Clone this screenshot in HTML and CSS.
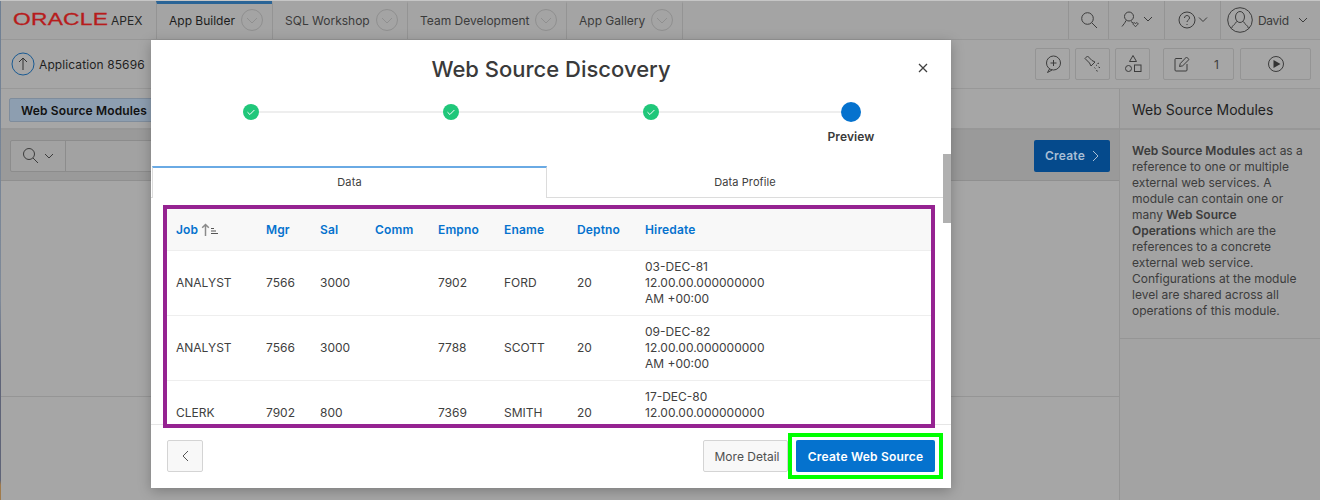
FILE: index.html
```html
<!DOCTYPE html>
<html lang="en">
<head>
<meta charset="utf-8">
<title>Web Source Discovery</title>
<link rel="stylesheet" href="styles.css">
</head>
<body>
<div class="page">
  <header class="topbar">
    <div class="logo"><span class="oracle">ORACLE</span><span class="apex">APEX</span></div>
    <nav class="nav">
      <div class="nav-tab nav-tab-active w1"><span>App Builder</span><svg class="circ" viewBox="0 0 22 22"><circle cx="11" cy="11" r="10.5"/><path d="M6 9l5 5 5-5"/></svg></div>
      <div class="nav-tab w2"><span>SQL Workshop</span><svg class="circ" viewBox="0 0 22 22"><circle cx="11" cy="11" r="10.5"/><path d="M6 9l5 5 5-5"/></svg></div>
      <div class="nav-tab w3"><span>Team Development</span><svg class="circ" viewBox="0 0 22 22"><circle cx="11" cy="11" r="10.5"/><path d="M6 9l5 5 5-5"/></svg></div>
      <div class="nav-tab w4"><span>App Gallery</span><svg class="circ" viewBox="0 0 22 22"><circle cx="11" cy="11" r="10.5"/><path d="M6 9l5 5 5-5"/></svg></div>
    </nav>
    <div class="tools">
      <div class="tool t1"><svg class="ico" width="18" height="18" viewBox="0 0 18 18"><circle cx="7.5" cy="7.5" r="5.8"/><path d="M11.8 11.8L17 17"/></svg></div>
      <div class="tool t2"><svg class="ico" width="32" height="18" viewBox="0 0 32 18"><circle cx="8" cy="5.5" r="4.5"/><path d="M5 9.5C4 12 2.5 13.5 1 15.5M10 10.5l2 1.5"/><path d="M12 12.5c1-1 2-1 2.500 0 .5-1 2-1 2.500 0 0 1.500-1.500 2-2.500 3-1-1-2.500-1.500-2.500-3z"/><path d="M23 6l4 4 4-4"/></svg></div>
      <div class="tool t3"><svg class="ico" width="30" height="18" viewBox="0 0 30 18"><circle cx="9" cy="9" r="8"/><path d="M6.500 7c0-3.300 5-3.300 5 0 0 2-2.500 2-2.500 4M9 13v1"/><path d="M21 6.500l4 4 4-4"/></svg></div>
      <div class="tool t4"><svg class="ico avatar" width="26" height="26" viewBox="0 0 26 26"><circle cx="13" cy="13" r="12.300"/><ellipse cx="13" cy="10" rx="4.500" ry="5.500"/><path d="M9.500 14.500C9 17 5 18 4.500 21.500M16.500 14.500C17 17 21 18 21.500 21.500"/></svg><span class="david">David</span><svg class="ico" width="10" height="6" viewBox="0 0 10 6"><path d="M1 1l4 4 4-4"/></svg></div>
    </div>
  </header>

  <section class="toolbar">
    <svg class="up" width="24" height="24" viewBox="0 0 24 24"><circle cx="12" cy="12" r="11"/><path d="M12 18V6M8 10l4-4 4 4"/></svg>
    <span class="app-name">Application 85696</span>
    <div class="actions">
      <div class="btn-g b-s"><svg class="ico" width="18" height="18" viewBox="0 0 18 18"><circle cx="9.500" cy="8" r="7"/><path d="M5.500 14l-2 3.500 4.500-2.500M9.500 5v6M6.500 8h6"/></svg></div>
      <div class="btn-g b-s"><svg class="ico" width="18" height="18" viewBox="0 0 18 18"><path d="M1 3.500L3.500 1 8 5.500l3 1.500-4 4-1.500-3zM12 10l1 .5M10.500 12.500l.8 1M13.500 8.500l1.500-.3M14.500 12l1.500.8M12.500 15l.8 1.500"/></svg></div>
      <div class="btn-g b-s"><svg class="ico" width="18" height="20" viewBox="0 0 18 20"><path d="M9 1.500l3.500 6h-7z"/><circle cx="4.500" cy="14.500" r="3"/><rect x="10.500" y="11" width="6.500" height="6.500"/></svg></div>
      <div class="btn-g b-m gap"><svg class="ico" width="16" height="16" viewBox="0 0 16 16"><path d="M8 2.500H2a1 1 0 0 0-1 1V14a1 1 0 0 0 1 1h10a1 1 0 0 0 1-1V8M5.500 10.500l.8-3L12.500 1l2.500 2.500-6.300 6.300z"/></svg><span>1</span></div>
      <div class="btn-g b-m last"><svg class="ico" width="18" height="18" viewBox="0 0 18 18"><circle cx="9" cy="9" r="7.500"/><path class="solid" d="M6.500 5l7 4-7 4z"/></svg></div>
    </div>
  </section>

  <main class="main">
    <div class="content">
      <div class="crumbs"><div class="crumb">Web Source Modules</div></div>
      <div class="searchbar">
        <div class="search"><div class="search-btn"><svg class="ico" width="18" height="18" viewBox="0 0 18 18"><circle cx="7" cy="7" r="5.500"/><path d="M11 11l5 5"/></svg><svg class="ico" width="10" height="6" viewBox="0 0 10 6"><path d="M1 1l4 4 4-4"/></svg></div></div>
        <div class="create">Create<svg class="ico" width="7" height="12" viewBox="0 0 7 12"><path d="M1 1l5 5-5 5"/></svg></div>
      </div>
      <div class="empty"></div>
    </div>
    <aside class="side">
      <h2 class="side-title">Web Source Modules</h2>
      <p class="side-body"><b>Web Source Modules</b> act as a reference to one or multiple external web services. A module can contain one or many <b>Web Source<br>Operations</b> which are the references to a concrete external web service. Configurations at the module level are shared across all operations of this module.</p>
    </aside>
  </main>

  <div class="modal">
    <div class="modal-head">
      <h1 class="modal-title">Web Source Discovery</h1>
      <svg class="close" width="10" height="10" viewBox="0 0 10 10"><path d="M1 1l8 8M9 1L1 9"/></svg>
    </div>
    <div class="steps">
      <div class="step"><svg class="dot" width="16" height="16" viewBox="0 0 16 16"><circle cx="8" cy="8" r="8"/><path d="M4.500 8.200l2.400 2.300 4.500-4.500"/></svg></div>
      <div class="step"><svg class="dot" width="16" height="16" viewBox="0 0 16 16"><circle cx="8" cy="8" r="8"/><path d="M4.500 8.200l2.400 2.300 4.500-4.500"/></svg></div>
      <div class="step"><svg class="dot" width="16" height="16" viewBox="0 0 16 16"><circle cx="8" cy="8" r="8"/><path d="M4.500 8.200l2.400 2.300 4.500-4.500"/></svg></div>
      <div class="step step-last"><div class="dot-now"></div><div class="step-label">Preview</div></div>
    </div>
    <div class="tabs">
      <div class="tab tab-on">Data</div>
      <div class="tab">Data Profile</div>
    </div>
    <div class="frame">
      <table class="grid">
        <colgroup><col class="c1"><col class="c2"><col class="c3"><col class="c4"><col class="c5"><col class="c6"><col class="c7"><col class="c8"></colgroup>
        <thead>
          <tr><th>Job <svg class="sort" width="20" height="13" viewBox="0 0 20 13"><path class="arrow" d="M4.500 13V1.500M1.200 4.800l3.300-3.300 3.300 3.300"/><path class="lines" d="M10 5.500h3M10 8h5M10 10.500h7"/></svg></th><th>Mgr</th><th>Sal</th><th>Comm</th><th>Empno</th><th>Ename</th><th>Deptno</th><th>Hiredate</th></tr>
        </thead>
        <tbody>
          <tr><td>ANALYST</td><td>7566</td><td>3000</td><td></td><td>7902</td><td>FORD</td><td>20</td><td>03-DEC-81<br>12.00.00.000000000<br>AM +00:00</td></tr>
          <tr><td>ANALYST</td><td>7566</td><td>3000</td><td></td><td>7788</td><td>SCOTT</td><td>20</td><td>09-DEC-82<br>12.00.00.000000000<br>AM +00:00</td></tr>
          <tr><td>CLERK</td><td>7902</td><td>800</td><td></td><td>7369</td><td>SMITH</td><td>20</td><td>17-DEC-80<br>12.00.00.000000000<br>AM +00:00</td></tr>
        </tbody>
      </table>
    </div>
    <div class="foot">
      <div class="back"><svg class="ico" width="7" height="12" viewBox="0 0 7 12"><path d="M6 1L1 6l5 5"/></svg></div>
      <div class="more">More Detail</div>
      <div class="mark"><div class="go">Create Web Source</div></div>
    </div>
    <div class="thumb"></div>
  </div>
</div>
</body>
</html>
```
FILE: styles.css
```css
* { box-sizing: border-box; }
html, body { margin: 0; padding: 0; }
body { font-family: Inter, "Liberation Sans", sans-serif; font-size: 12px; color: #262626; background: #a6a6a6; }
.page { position: relative; width: 1320px; height: 500px; overflow: hidden; display: flex; flex-direction: column; background: #a6a6a6; border-top: 1px solid #c6c6c6; }
.page::before { content: ""; position: absolute; left: 0; top: 0; width: 1px; height: 100%; z-index: 2; background: linear-gradient(#6f7f93 0, #7f8a99 60%, #5f6478 75%, #5f6478 96%, #a07a4a 97%); }
svg { display: block; flex: none; }
.ico { fill: none; stroke: #3c3c3c; stroke-width: 1; }
.ico .solid { fill: #333; stroke: none; }

.topbar { height: 39px; display: flex; align-items: stretch; background: #a4a4a4; border-bottom: 1px solid #979797; flex: none; }
.logo { width: 156px; display: flex; align-items: center; padding-left: 13px; }
.oracle { color: #b71c1c; font: 400 16px "Liberation Sans", sans-serif; letter-spacing: .2px; transform: scaleX(1.42); transform-origin: 0 50%; width: 98px; -webkit-text-stroke: .3px #b71c1c; }
.apex { font-size: 12px; color: #262626; }
.nav { display: flex; }
.nav-tab { display: flex; align-items: center; padding-left: 12px; border-left: 1px solid #949494; border-top: 3px solid transparent; color: #3b3b3b; font-size: 12px; }
.nav-tab-active { border-top-color: #2a6496; color: #1c1c1c; }
.nav-tab span { margin-top: -3px; }
.w1 { width: 116px; }
.w2 { width: 135px; }
.w3 { width: 159px; }
.w4 { width: 117px; border-right: 1px solid #949494; }
.circ { width: 22px; height: 22px; margin: -3px 9px 0 auto; fill: none; stroke: #8f8f8f; stroke-width: 1; }
.tools { margin-left: auto; display: flex; }
.tool { display: flex; align-items: center; justify-content: center; border-left: 1px solid #949494; }
.t1 { width: 40px; }
.t2 { width: 56px; }
.t3 { width: 56px; }
.t4 { width: 100px; justify-content: flex-start; padding-left: 7px; }
.avatar { margin-left: -1px; }
.david { margin: 0 9px 0 5px; color: #3b3b3b; letter-spacing: -.3px; }

.toolbar { height: 49px; display: flex; align-items: center; padding: 0 9px 0 11px; background: #a6a6a6; border-bottom: 1px solid #989898; flex: none; }
.up { fill: none; stroke: #1a5a92; stroke-width: 1; }
.up path { stroke: #333; }
.app-name { margin-left: 4px; color: #1f1f1f; letter-spacing: .1px; }
.actions { margin-left: auto; display: flex; gap: 5px; }
.btn-g { height: 32px; display: flex; align-items: center; justify-content: center; border: 1px solid #949494; border-radius: 2px; background: #a6a6a6; color: #3c3c3c; }
.b-s { width: 35px; }
.b-m { width: 71px; }
.gap { margin-left: 8px; gap: 24px; padding-right: 4px; }
.last { margin-left: 1px; }

.main { flex: 1; display: flex; min-height: 0; }
.content { flex: 1; display: flex; flex-direction: column; }
.crumbs { height: 41px; padding: 9px; background: #a6a6a6; border-bottom: 2px solid #979797; }
.crumb { width: 180px; height: 24px; display: flex; align-items: center; padding-left: 11px; background: #8d9eb0; border: 1px solid #7e8c9c; border-radius: 2px; font-weight: 600; color: #111; white-space: nowrap; letter-spacing: .15px; }
.searchbar { height: 51px; display: flex; align-items: center; justify-content: space-between; padding: 1px 9px 0 10px; background: #9a9a9a; border-bottom: 1px solid #8f8f8f; }
.search { width: 400px; height: 32px; border: 1px solid #8c8c8c; border-radius: 2px; background: #a2a2a2; }
.search-btn { width: 55px; height: 30px; display: flex; align-items: center; justify-content: center; gap: 4px; border-right: 1px solid #8c8c8c; }
.create { width: 76px; height: 32px; display: flex; align-items: center; justify-content: center; gap: 7px; background: #054a8c; border-radius: 2px; color: #a9bfd5; font-weight: 600; letter-spacing: .2px; }
.create .ico { stroke: #a9bfd5; }
.empty { flex: 1; background: linear-gradient(#a6a6a6 215px, #959595 215px, #959595 216px, #a6a6a6 216px); }

.side { width: 201px; flex: none; background: #a3a3a3; border-left: 1px solid #959595; }
.side-title { margin: 0; height: 41px; padding: 12px 0 0 12px; font-size: 14px; font-weight: 400; color: #1f1f1f; border-bottom: 2px solid #979797; line-height: 17px; }
.side-body { margin: 0; height: 209px; padding: 13px 12px 0 12px; line-height: 16px; color: #3c3c3c; border-bottom: 1px solid #959595; }
.side-body b { font-weight: 600; }

.modal { position: absolute; left: 151px; top: 39px; width: 800px; height: 448px; background: #fff; display: flex; flex-direction: column; box-shadow: 0 3px 12px rgba(0,0,0,.25); z-index: 3; }
.modal-head { height: 56px; padding-top: 2px; display: flex; align-items: center; justify-content: center; position: relative; flex: none; }
.modal-title { margin: 0; font-size: 22px; font-weight: 500; color: #3a3a3a; line-height: 30px; }
.close { position: absolute; left: 767px; top: 23px; fill: none; stroke: #404040; stroke-width: 1.300; }

.steps { height: 70px; display: grid; grid-template-columns: repeat(4, 200px); flex: none; padding-top: 6px; }
.step { position: relative; height: 20px; display: flex; flex-direction: column; align-items: center; }
.step .dot { margin-top: 2px; position: relative; z-index: 1; fill: #20c77a; }
.dot path { fill: none; stroke: #fff; stroke-width: 1; }
.step::after { content: ""; position: absolute; left: 50%; width: 200px; top: 9px; height: 2px; background: #eeeeee; }
.step-last::after { display: none; }
.dot-now { width: 20px; height: 20px; border-radius: 50%; background: #0572ce; flex: none; position: relative; z-index: 1; }
.step-label { margin-top: 8px; font-weight: 600; color: #3a3a3a; line-height: 14px; white-space: nowrap; letter-spacing: .1px; }

.tabs { height: 32px; display: flex; width: 792px; padding-left: 1px; flex: none; border-bottom: 1px solid #dcdcdc; font-size: 11px; color: #404040; letter-spacing: .1px; }
.tab { flex: 1; display: flex; align-items: center; justify-content: center; }
.tab-on { flex: none; width: 395px; height: 32px; padding-bottom: 2px; border-top: 2px solid #6aaae4; border-left: 1px solid #dcdcdc; border-right: 1px solid #dcdcdc; background: #fff; }

.frame { position: relative; z-index: 1; margin: 7px 0 -4px 12px; width: 772px; height: 223px; flex: none; border: 4px solid #952391; background: #fff; overflow: hidden; }
.grid { border-collapse: collapse; table-layout: fixed; width: 764px; }
.c1 { width: 90px; } .c2 { width: 54px; } .c3 { width: 55px; } .c4 { width: 63px; }
.c5 { width: 66px; } .c6 { width: 73px; } .c7 { width: 68px; } .c8 { width: 295px; }
.grid th { height: 41px; padding: 0 0 0 9px; text-align: left; background: #f8f8f8; color: #0572ce; font-weight: 600; white-space: nowrap; border-bottom: 1px solid #eeeeee; letter-spacing: .15px; }
.grid th .sort { display: inline-block; vertical-align: -2px; fill: none; }
.sort .arrow { stroke: #8a8a8a; stroke-width: 1.500; }
.sort .lines { stroke: #555; stroke-width: 1; }
.grid td { height: 65px; padding: 0 0 0 9px; color: #404040; line-height: 16px; border-bottom: 1px solid #eeeeee; white-space: nowrap; }

.foot { height: 64px; padding: 0 8px 1px 16px; display: flex; align-items: center; border-top: 1px solid #e6e6e6; flex: none; }
.back { width: 36px; height: 32px; display: flex; align-items: center; justify-content: center; background: #f8f8f8; border: 1px solid #d4d4d4; border-radius: 2px; }
.back .ico { stroke: #555; }
.more { margin-left: auto; width: 85px; height: 32px; padding-left: 3px; display: flex; align-items: center; justify-content: center; background: #f8f8f8; border: 1px solid #d4d4d4; border-radius: 2px; color: #505050; }
.mark { border: 4px solid #00ff00; padding: 3px 4px; flex: none; }
.go { width: 139px; height: 32px; display: flex; align-items: center; justify-content: center; background: #0572ce; border-radius: 2px; color: #fff; font-weight: 600; letter-spacing: .2px; }

.thumb { position: absolute; left: 792px; top: 114px; width: 8px; height: 69px; background: #b0b0b0; }
```
